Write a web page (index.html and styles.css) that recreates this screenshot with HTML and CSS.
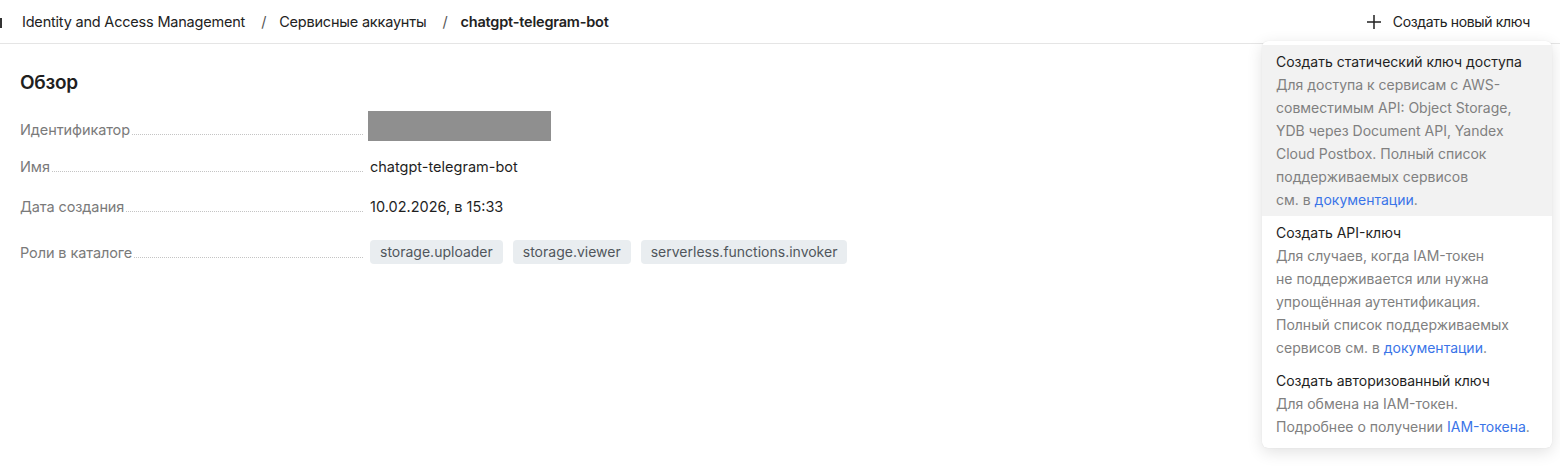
FILE: index.html
```html
<!DOCTYPE html>
<html lang="ru">
<head>
<meta charset="utf-8">
<link rel="stylesheet" href="styles.css">
</head>
<body>
<header class="topbar">
  <nav class="crumbs">
    <span class="crumb-cut" aria-hidden="true"></span>
    <span class="crumb">Identity and Access Management</span>
    <span class="sep">/</span>
    <span class="crumb">Сервисные аккаунты</span>
    <span class="sep">/</span>
    <span class="crumb current">chatgpt-telegram-bot</span>
  </nav>
  <button class="create-btn">
    <svg class="plus" width="16" height="16" viewBox="0 0 16 16"><path d="M8 1v14M1 8h14" stroke="#222" stroke-width="1.5" fill="none"/></svg>
    <span>Создать новый ключ</span>
  </button>
</header>
<main class="content">
  <h2 class="title">Обзор</h2>
  <dl class="props">
    <div class="row row-id">
      <dt><span>Идентификатор</span></dt>
      <dd><div class="masked"></div></dd>
    </div>
    <div class="row">
      <dt><span>Имя</span></dt>
      <dd>chatgpt-telegram-bot</dd>
    </div>
    <div class="row">
      <dt><span>Дата создания</span></dt>
      <dd>10.02.2026, в 15:33</dd>
    </div>
    <div class="row row-tags">
      <dt><span>Роли в каталоге</span></dt>
      <dd class="tags">
        <span class="tag">storage.uploader</span>
        <span class="tag">storage.viewer</span>
        <span class="tag">serverless.functions.invoker</span>
      </dd>
    </div>
  </dl>
</main>
<div class="menu">
  <div class="item active">
    <div class="item-title">Создать статический ключ доступа</div>
    <div class="item-desc">Для доступа к сервисам с AWS-<br>совместимым API: Object Storage,<br>YDB через Document API, Yandex<br>Cloud Postbox. Полный список<br>поддерживаемых сервисов<br>см. в <a href="#">документации</a>.</div>
  </div>
  <div class="item">
    <div class="item-title">Создать API-ключ</div>
    <div class="item-desc">Для случаев, когда IAM-токен<br>не поддерживается или нужна<br>упрощённая аутентификация.<br>Полный список поддерживаемых<br>сервисов см. в <a href="#">документации</a>.</div>
  </div>
  <div class="item">
    <div class="item-title">Создать авторизованный ключ</div>
    <div class="item-desc">Для обмена на IAM-токен.<br>Подробнее о получении <a href="#">IAM-токена</a>.</div>
  </div>
</div>
</body>
</html>
```
FILE: styles.css
```css
* { box-sizing: border-box; }
html, body { margin: 0; padding: 0; background: #fff; }
body {
  font-family: "Inter", "Noto Sans", sans-serif;
  color: #1f1f1f;
  font-size: 14px;
  width: 1560px;
  height: 466px;
  overflow: hidden;
  position: relative;
}
.topbar {
  height: 44px;
  border-bottom: 1px solid #e5e5e5;
  display: flex;
  align-items: center;
  justify-content: space-between;
  padding: 0 30px 0 0;
}
.crumbs {
  display: flex;
  align-items: center;
  font-size: 14.5px;
  letter-spacing: -0.2px;
  color: #222;
}
.crumb-cut {
  width: 2px;
  height: 10px;
  background: #333;
  margin: 3px 20px 0 0;
  display: inline-block;
}
.sep { margin: 0 13px 0 16px; color: #555; }
.crumb.current { font-weight: 600; }
.create-btn {
  display: flex;
  align-items: center;
  gap: 11px;
  background: none;
  border: 0;
  font: inherit;
  font-size: 14px;
  letter-spacing: -0.35px;
  color: #222;
  padding: 0;
}
.content { padding: 24px 20px 0; }
.title {
  margin: 0 0 14px;
  font-size: 19px;
  font-weight: 600;
  line-height: 30px;
  letter-spacing: -0.3px;
}
.props { margin: 0; display: flex; flex-direction: column; gap: 10px; }
.row { display: flex; align-items: center; min-height: 30px; }
.row-id { margin-top: -1px; }
.row-id dt { padding-top: 6px; }
.row-tags { margin-top: 6px; }
.row dt {
  width: 343px;
  display: flex;
  align-items: baseline;
  color: #7a7a7a;
  font-size: 14.5px;
  letter-spacing: -0.1px;
  margin-right: 7px;
}
.row dt::after {
  content: "";
  flex: 1;
  border-bottom: 1px dotted #c4c4c4;
  margin-left: 2px;
}
.row dd { margin: 0; font-size: 14.5px; color: #1f1f1f; }
.masked { width: 183px; height: 30px; background: #8f8f8f; margin-left: -2px; }
.row dd.tags { display: flex; gap: 10px; font-size: 14px; }
.tag {
  background: #e9edf0;
  color: #50565c;
  border-radius: 4px;
  padding: 0 10px;
  line-height: 24px;
  height: 24px;
}
.menu {
  position: absolute;
  left: 1262px;
  top: 41px;
  width: 290px;
  height: 407px;
  background: #fff;
  border-radius: 6px;
  box-shadow: 0 4px 16px rgba(0,0,0,0.12), 0 0 1px rgba(0,0,0,0.12);
  padding: 4px 0;
}
.item { padding: 5px 14px; }
.item.active { background: #f2f2f2; }
.item-title { font-size: 14px; line-height: 23px; color: #1f1f1f; }
.item-desc { font-size: 14px; line-height: 23px; color: #808080; }
.item-desc a { color: #3a74e8; text-decoration: none; }
```
